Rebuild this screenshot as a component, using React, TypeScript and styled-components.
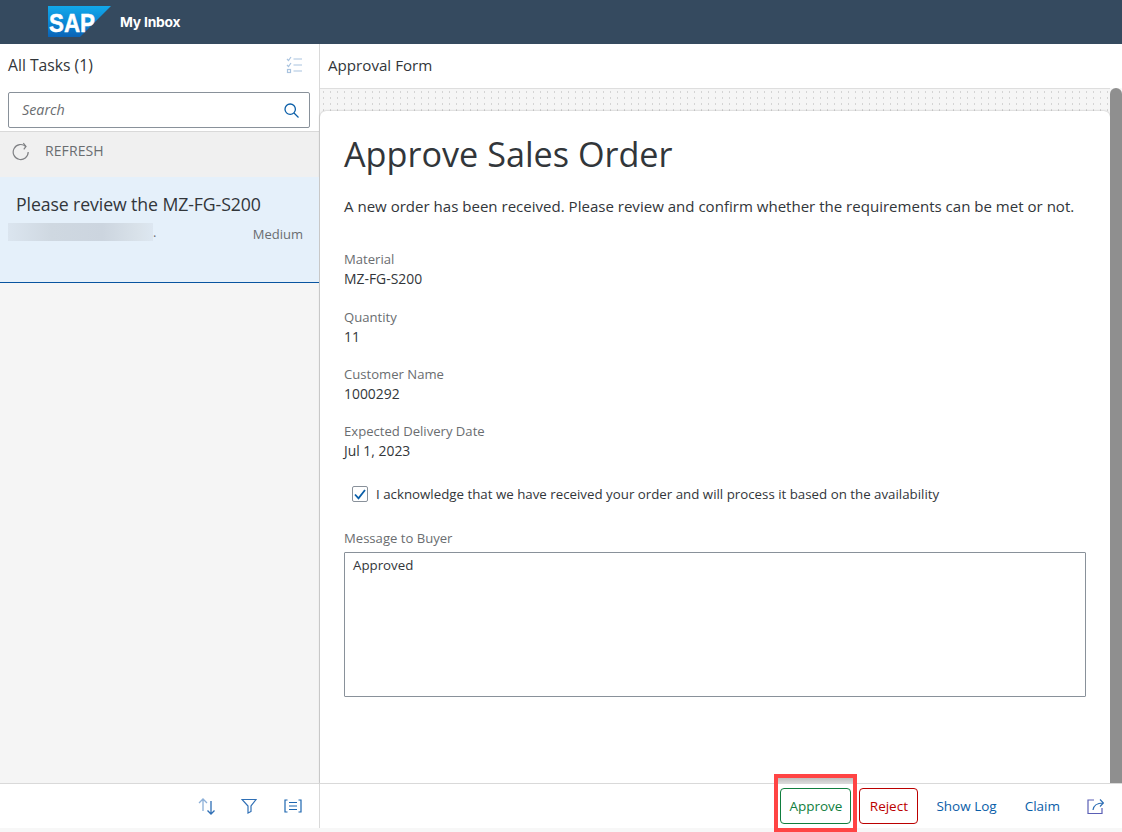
import React from "react";
import styled, { createGlobalStyle } from "styled-components";

const Global = createGlobalStyle`
  html, body { margin: 0; padding: 0; background: #f7f7f7; }
  body { font-family: "Open Sans", "Liberation Sans", Arial, sans-serif; color: #32363a; }
  * { box-sizing: border-box; }
`;

const Page = styled.div`
  width: 1122px; height: 832px; position: relative; overflow: hidden;
  display: flex; flex-direction: column;
`;
const Header = styled.header`
  height: 44px; background: #354a5f; display: flex; align-items: center; padding-left: 48px; gap: 8px; flex: none;
`;
const AppTitle = styled.span`
  color: #fff; font-size: 13.8px; font-weight: 700; font-family: "Inter", sans-serif; letter-spacing: -0.2px; position: relative; top: -0.5px;
`;
const Body = styled.div`
  display: flex; height: 788px; background: #f7f7f7; padding-bottom: 4px;
`;
const Master = styled.aside`
  width: 320px; flex: none; display: flex; flex-direction: column; border-right: 1px solid #d9d9d9; background: #f5f5f5;
`;
const MasterHead = styled.div`
  height: 44px; background: #fff; display: flex; align-items: center; justify-content: space-between; padding: 0 17px 2px 8px; flex: none;
`;
const PanelTitle = styled.span<{ $size: number }>`
  font-size: ${(p) => p.$size}px; color: #32363a;
`;
const SearchWrap = styled.div`
  background: #fff; padding: 4px 9px 3px 8px; flex: none; border-bottom: 1px solid #d9d9d9; height: 44px;
`;
const SearchBox = styled.div`
  height: 36px; border: 1px solid #89919a; border-radius: 2px; display: flex; align-items: center; justify-content: space-between; padding: 0 10px 0 13px; background: #fff;
`;
const SearchText = styled.span`
  font-style: italic; font-size: 14.3px; color: #6a6d70; margin-bottom: 2px;
`;
const RefreshRow = styled.div`
  height: 45px; background: #f0f0f0; display: flex; align-items: center; padding-left: 12px; gap: 15px; padding-bottom: 8px; flex: none;
`;
const RefreshIcon = styled.svg`
  display: block; margin-top: 3px;
`;
const RefreshText = styled.span`
  font-size: 14px; color: #6a6d70; letter-spacing: 0.1px;
`;
const TaskItem = styled.div`
  height: 106px; flex: none; background: #e5f0fa; border-bottom: 1px solid #0854a0; position: relative;
  padding: 15px 16px 0 16px;
`;
const TaskTitle = styled.div`
  font-size: 17.700px; line-height: 24px; color: #32363a; letter-spacing: -0.1px;
`;
const TaskMeta = styled.div`
  display: flex; align-items: flex-start; margin: 7px 0 0 -8px; height: 20px;
`;
const BlurredSender = styled.span`
  width: 145px; height: 18px; display: block; flex: none;
  background: linear-gradient(90deg, #dbe5ef 0%, #cfd8e1 30%, #ccd5df 65%, #d9e2ea 90%, #dde7f1 100%);
`;
const Dot = styled.span`
  font-size: 13px; line-height: 18px; color: #6a6d70; flex: 1; padding-left: 0;
`;
const Priority = styled.span`
  font-size: 13px; line-height: 20px; color: #6a6d70; padding-top: 1px;
`;
const MasterFill = styled.div`
  flex: 1; background: #f5f5f5;
`;
const FootBar = styled.div`
  height: 45px; flex: none; background: #fff; border-top: 1px solid #d9d9d9; display: flex; align-items: center;
`;
const MasterFoot = styled(FootBar)`
  justify-content: flex-end; padding-right: 17px;
`;
const FootIcon = styled.svg<{ $gap?: number }>`
  display: block; margin-right: ${(p) => p.$gap ?? 0}px; fill: none;
`;
const Detail = styled.main`
  flex: 1; display: flex; flex-direction: column; min-width: 0;
`;
const DetailHead = styled.div`
  height: 44px; flex: none; background: #fff; display: flex; align-items: center; padding: 0 0 2px 8px;
`;
const ScrollArea = styled.div`
  flex: 1; display: flex; min-height: 0;
`;
const FormColumn = styled.div`
  flex: 1; display: flex; flex-direction: column; min-width: 0;
  background-color: #f5f5f5; border-top: 1px solid #dedede;
  background-image: radial-gradient(#d4d4d4 0.6px, transparent 0.8px);
  background-size: 7px 6px; padding-top: 22px;
`;
const Card = styled.section`
  flex: 1; background: #fff; border-radius: 6px 6px 0 0; box-shadow: 0 0 2px rgba(0,0,0,.3); padding: 21px 24px 0 24px;
`;
const Scrollbar = styled.div`
  width: 12px; flex: none; background: #8f8f8f; border-radius: 6px 6px 0 0;
`;
const Heading = styled.h1`
  margin: 0; font-weight: 400; font-size: 34.200px; line-height: 44px; color: #32363a;
`;
const Intro = styled.p`
  margin: 21px 0 0 0; font-size: 15.050px; line-height: 18px; color: #32363a; white-space: nowrap;
`;
const Field = styled.div<{ $gap: number }>`
  margin-top: ${(p) => p.$gap}px;
`;
const Label = styled.div`
  font-size: 13.100px; line-height: 20px; color: #6a6d70;
`;
const Value = styled.div`
  font-size: 13.900px; line-height: 20px; color: #32363a;
`;
const CheckRow = styled.div`
  display: flex; align-items: center; gap: 8px; margin: 23px 0 0 8px; height: 20px;
`;
const CheckBox = styled.span`
  width: 16px; height: 16px; border: 1px solid #89919a; border-radius: 2px; background: #fff; display: flex; align-items: center; justify-content: center;
`;
const CheckLabel = styled.span`
  font-size: 13.300px; color: #32363a;
`;
const MessageBox = styled.div`
  width: 742px; height: 145px; margin-top: 4px; border: 1px solid #89919a; border-radius: 1px; padding: 3px 8px; font-size: 13.300px; line-height: 18px; color: #32363a; background: #fff;
`;
const DetailFoot = styled(FootBar)`
  justify-content: flex-end; padding-right: 18px;
`;
const ActionButton = styled.button<{ $tone: "green" | "red" }>`
  height: 36px; border-radius: 4px; background: #fff; font: 13.500px "Open Sans", sans-serif; padding: 0;
  border: 1px solid ${(p) => (p.$tone === "green" ? "#107e3e" : "#bb0000")};
  color: ${(p) => (p.$tone === "green" ? "#107e3e" : "#bb0000")};
  width: ${(p) => (p.$tone === "green" ? "71px" : "59px")};
  margin-right: ${(p) => (p.$tone === "green" ? "8px" : "18px")};
`;
const TextAction = styled.span<{ $gap: number }>`
  font-size: 13.500px; color: #0a5ea8; margin-right: ${(p) => p.$gap}px;
`;
const Highlight = styled.div`
  position: absolute; left: 774px; top: 774px; width: 83px; height: 58px; border: 4px solid #ff4444; pointer-events: none;
`;
const HighlightShade = styled.div`
  position: absolute; left: 778px; top: 778px; width: 75px; height: 5px; background: linear-gradient(#bdbdbd, #d9d9d9); pointer-events: none;
`;
const LogoSvg = styled.svg`
  display: block; align-self: flex-start; margin-top: 4px;
`;
const LogoText = styled.text`
  font-family: "Liberation Sans", Arial, sans-serif; font-weight: 700; font-size: 26.500px; fill: #fff; stroke: #fff; stroke-width: 0.5px;
`;

const SapLogo = () => (
  <LogoSvg width="64" height="34" viewBox="0 0 64 34">
    <defs>
      <linearGradient id="sapg" x1="0" y1="0" x2="0" y2="1">
        <stop offset="0" stopColor="#12a8ea" />
        <stop offset="0.55" stopColor="#0a86d4" />
        <stop offset="1" stopColor="#0a62b5" />
      </linearGradient>
    </defs>
    <polygon points="0,2 63,2 32,33 0,33" fill="url(#sapg)" />
    <LogoText x="1" y="28" textLength="46" lengthAdjust="spacingAndGlyphs">SAP</LogoText>
  </LogoSvg>
);

const App = () => (
  <Page>
    <Global />
    <Header>
      <SapLogo />
      <AppTitle>My Inbox</AppTitle>
    </Header>
    <Body>
      <Master>
        <MasterHead>
          <PanelTitle $size={15.700}>All Tasks (1)</PanelTitle>
          <svg width="16" height="18" viewBox="0 0 16 18" fill="none" stroke="#a9c3df" strokeWidth="1.200">
            <path d="M1 3l1.500 1.500L5 1M1 9l1.500 1.500L5 7" />
            <rect x="1.500" y="13.500" width="3" height="3" />
            <path d="M7.500 3H16M7.500 9H16M7.500 15H16" />
          </svg>
        </MasterHead>
        <SearchWrap>
          <SearchBox>
            <SearchText>Search</SearchText>
            <svg width="15" height="15" viewBox="0 0 15 15" fill="none" stroke="#0a5ea8" strokeWidth="1.300">
              <circle cx="6.200" cy="6.200" r="5.200" />
              <path d="M10 10l4.500 4.500" />
            </svg>
          </SearchBox>
        </SearchWrap>
        <RefreshRow>
          <RefreshIcon width="18" height="20" viewBox="0 0 18 20" fill="none" stroke="#7f8184" strokeWidth="1.200">
            <path d="M13.800 4.500A7.500 7.500 0 1 0 16.200 10" />
            <path d="M11.300 1l2.700 3.400-2.200 3" />
          </RefreshIcon>
          <RefreshText>REFRESH</RefreshText>
        </RefreshRow>
        <TaskItem>
          <TaskTitle>Please review the MZ-FG-S200</TaskTitle>
          <TaskMeta>
            <BlurredSender />
            <Dot>.</Dot>
            <Priority>Medium</Priority>
          </TaskMeta>
        </TaskItem>
        <MasterFill />
        <MasterFoot>
          <FootIcon $gap={25} width="18" height="18" viewBox="0 0 18 18" strokeWidth="1.300">
            <path d="M5 14V2M1 6l4-4 4 4" stroke="#8db0d8" />
            <path d="M13 4v13M9.500 13.500l3.500 3.500 3.500-3.500" stroke="#2f6fb5" />
          </FootIcon>
          <FootIcon $gap={27} width="16" height="16" viewBox="0 0 16 16" stroke="#2f6fb5" strokeWidth="1.200">
            <path d="M1 1.500h14L10 8v5.500l-3 1.500V8z" />
          </FootIcon>
          <FootIcon width="18" height="14" viewBox="0 0 18 14" stroke="#1d66b0" strokeWidth="1.200">
            <path d="M3.500 1H1v12h2.500M14.500 1H17v12h-2.500M5 3.500h8M5 7h8M5 10.500h8" />
          </FootIcon>
        </MasterFoot>
      </Master>
      <Detail>
        <DetailHead>
          <PanelTitle $size={15.150}>Approval Form</PanelTitle>
        </DetailHead>
        <ScrollArea>
          <FormColumn>
            <Card>
              <Heading>Approve Sales Order</Heading>
              <Intro>A new order has been received. Please review and confirm whether the requirements can be met or not.</Intro>
              <Field $gap={34}>
                <Label>Material</Label>
                <Value>MZ-FG-S200</Value>
              </Field>
              <Field $gap={18}>
                <Label>Quantity</Label>
                <Value>11</Value>
              </Field>
              <Field $gap={17}>
                <Label>Customer Name</Label>
                <Value>1000292</Value>
              </Field>
              <Field $gap={17}>
                <Label>Expected Delivery Date</Label>
                <Value>Jul 1, 2023</Value>
              </Field>
              <CheckRow>
                <CheckBox>
                  <svg width="12" height="11" viewBox="0 0 12 11" fill="none" stroke="#0a5ea8" strokeWidth="1.800">
                    <path d="M1 5.500l3.500 3.800L11 1" />
                  </svg>
                </CheckBox>
                <CheckLabel>I acknowledge that we have received your order and will process it based on the availability</CheckLabel>
              </CheckRow>
              <Field $gap={24}>
                <Label>Message to Buyer</Label>
                <MessageBox>Approved</MessageBox>
              </Field>
            </Card>
          </FormColumn>
          <Scrollbar />
        </ScrollArea>
        <DetailFoot>
          <ActionButton $tone="green">Approve</ActionButton>
          <ActionButton $tone="red">Reject</ActionButton>
          <TextAction $gap={28}>Show Log</TextAction>
          <TextAction $gap={27}>Claim</TextAction>
          <svg width="17" height="17" viewBox="0 0 17 17" fill="none" stroke="#5a5fb5" strokeWidth="1.200">
            <path d="M7 2H1v13.500h14V10" />
            <path d="M6 12c.5-4 3-7 10-7M13 1.500L16.500 5 13 8.500" stroke="#2f6fb5" />
          </svg>
        </DetailFoot>
      </Detail>
    </Body>
    <HighlightShade />
    <Highlight />
  </Page>
);

export default App;
